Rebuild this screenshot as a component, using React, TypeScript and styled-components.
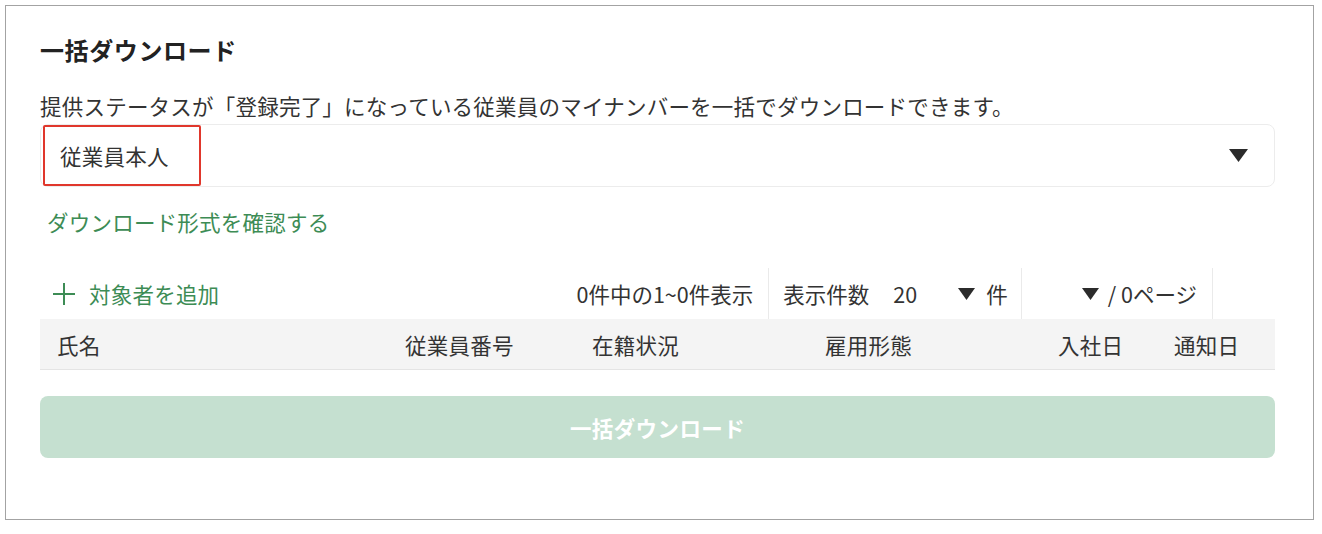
import React from "react";
import styled, { createGlobalStyle } from "styled-components";

const GlobalStyle = createGlobalStyle`
  html, body {
    margin: 0;
    padding: 0;
    background: #ffffff;
  }
  body {
    font-family: "Noto Sans CJK JP", "Noto Sans", "Liberation Sans", sans-serif;
    color: #333333;
    letter-spacing: 0.22px;
  }
`;

const Page = styled.div`
  padding: 5px 8px 0 5px;
`;

const Frame = styled.section`
  border: 1px solid #a3a3a3;
  padding: 27px 38px 61px 34px;
  background: #ffffff;
`;

const Title = styled.h1`
  margin: 0;
  font-size: 24px;
  line-height: 34px;
  font-weight: 700;
  letter-spacing: 0.6px;
  color: #222222;
`;

const Description = styled.p`
  margin: 23px 0 0;
  font-size: 21.5px;
  line-height: 32px;
  color: #333333;
`;

const SelectBox = styled.div`
  margin-top: 2px;
  height: 63px;
  box-sizing: border-box;
  border: 1px solid #ececec;
  border-radius: 8px;
  display: flex;
  align-items: center;
  justify-content: space-between;
  padding: 0 26px 0 2px;
`;

const Highlight = styled.span`
  display: flex;
  align-items: center;
  height: 61px;
  box-sizing: border-box;
  border: 2px solid #e0372c;
  border-radius: 2px;
  padding: 0 30px 0 15px;
  font-size: 21.5px;
  color: #333333;
`;

const LinkText = styled.a`
  display: block;
  margin: 19px 0 0 7px;
  font-size: 21.5px;
  line-height: 32px;
  color: #3d8c55;
  text-decoration: none;
`;

const Toolbar = styled.div`
  margin-top: 30px;
  height: 51px;
  display: flex;
  align-items: stretch;
  font-size: 21.5px;
  letter-spacing: 0;
`;

const AddButton = styled.button`
  flex: 1;
  display: flex;
  align-items: center;
  gap: 14px;
  padding: 0 0 0 13px;
  border: none;
  background: none;
  font: inherit;
  letter-spacing: 0.22px;
  color: #3d8c55;
  cursor: pointer;
  text-align: left;
`;

const Cell = styled.div<{ $divider?: boolean; $pad: string }>`
  display: flex;
  align-items: center;
  padding: ${(p) => p.$pad};
  border-left: ${(p) => (p.$divider ? "1px solid #eaeaea" : "none")};
  color: #333333;
  white-space: nowrap;
`;

const Spacer = styled.div`
  width: 62px;
  border-left: 1px solid #eaeaea;
`;

const MiniSelect = styled.div<{ $width: number; $gap: number }>`
  width: ${(p) => p.$width}px;
  margin-left: ${(p) => p.$gap}px;
  display: flex;
  align-items: center;
  justify-content: space-between;
`;

const Suffix = styled.span<{ $gap: number }>`
  margin-left: ${(p) => p.$gap}px;
`;

const HeaderRow = styled.div`
  display: grid;
  grid-template-columns: 348px 187px 233px 233px 116px 1fr;
  align-items: center;
  height: 51px;
  box-sizing: border-box;
  padding-left: 17px;
  background: #f4f4f4;
  border-bottom: 1px solid #e4e4e4;
  font-size: 21.5px;
  color: #333333;
`;

const DownloadButton = styled.button`
  display: block;
  width: 100%;
  margin-top: 26px;
  height: 62px;
  border: none;
  border-radius: 8px;
  background: #c5e0d0;
  color: #ffffff;
  font-family: inherit;
  font-size: 21.5px;
  font-weight: 700;
  letter-spacing: 0.4px;
`;

const IconSvg = styled.svg`
  display: block;
  flex-shrink: 0;
`;

const Triangle = ({ w = 18, h = 13 }: { w?: number; h?: number }) => (
  <IconSvg width={w} height={h} viewBox={`0 0 ${w} ${h}`}>
    <polygon points={`0,0 ${w},0 ${w / 2},${h}`} fill="#2b2b2b" />
  </IconSvg>
);

const PlusIcon = () => (
  <IconSvg width="22" height="22" viewBox="0 0 22 22">
    <path d="M11 0V22M0 11H22" stroke="#3d8c55" strokeWidth="2" fill="none" />
  </IconSvg>
);

const columns = ["氏名", "従業員番号", "在籍状況", "雇用形態", "入社日", "通知日"];

export default function App() {
  return (
    <Page>
      <GlobalStyle />
      <Frame>
        <Title>一括ダウンロード</Title>
        <Description>
          提供ステータスが「登録完了」になっている従業員のマイナンバーを一括でダウンロードできます。
        </Description>
        <SelectBox>
          <Highlight>従業員本人</Highlight>
          <Triangle w={19} h={13} />
        </SelectBox>
        <LinkText href="#">ダウンロード形式を確認する</LinkText>
        <Toolbar>
          <AddButton>
            <PlusIcon />
            対象者を追加
          </AddButton>
          <Cell $pad="0 15px 0 0">0件中の1~0件表示</Cell>
          <Cell $divider $pad="0 13px 0 14px">
            表示件数
            <MiniSelect $width={82} $gap={24}>
              <span>20</span>
              <Triangle w={17} h={12} />
            </MiniSelect>
            <Suffix $gap={11}>件</Suffix>
          </Cell>
          <Cell $divider $pad="0 15px 0 60px">
            <Triangle w={17} h={12} />
            <Suffix $gap={9}>/ 0ページ</Suffix>
          </Cell>
          <Spacer />
        </Toolbar>
        <HeaderRow>
          {columns.map((c) => (
            <span key={c}>{c}</span>
          ))}
        </HeaderRow>
        <DownloadButton>一括ダウンロード</DownloadButton>
      </Frame>
    </Page>
  );
}
